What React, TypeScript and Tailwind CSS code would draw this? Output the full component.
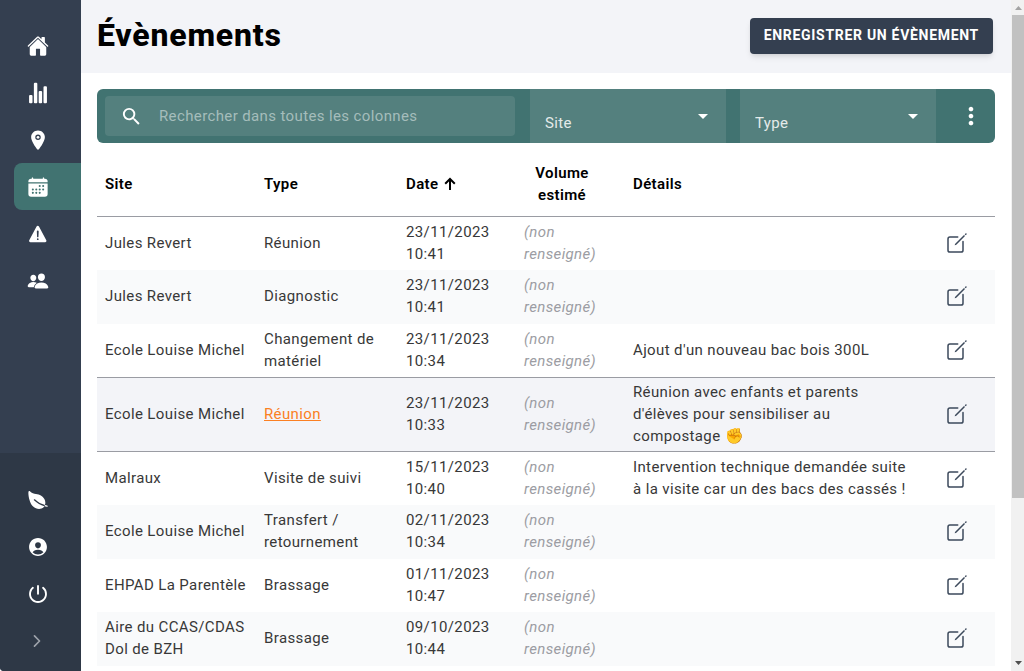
import React, { useState } from "react";
import {
  IoHome,
  IoStatsChart,
  IoLocation,
  IoCalendar,
  IoWarning,
  IoPeople,
  IoLeaf,
  IoPersonCircle,
  IoPower,
  IoChevronForward,
  IoCreateOutline,
} from "react-icons/io5";
import { MdSearch, MdMoreVert, MdArrowDropDown } from "react-icons/md";
import type { IconType } from "react-icons";
import clsx from "clsx";

interface NavItem {
  label: string;
  icon: IconType;
}

interface EventRow {
  id: number;
  site: string;
  type: string;
  day: string;
  time: string;
  details?: string;
}

const MAIN_NAV: NavItem[] = [
  { label: "Accueil", icon: IoHome },
  { label: "Statistiques", icon: IoStatsChart },
  { label: "Sites", icon: IoLocation },
  { label: "Évènements", icon: IoCalendar },
  { label: "Alertes", icon: IoWarning },
  { label: "Utilisateurs", icon: IoPeople },
];

const FOOTER_NAV: NavItem[] = [
  { label: "Compostage", icon: IoLeaf },
  { label: "Mon compte", icon: IoPersonCircle },
  { label: "Déconnexion", icon: IoPower },
];

const EVENTS: EventRow[] = [
  { id: 1, site: "Jules Revert", type: "Réunion", day: "23/11/2023", time: "10:41" },
  { id: 2, site: "Jules Revert", type: "Diagnostic", day: "23/11/2023", time: "10:41" },
  {
    id: 3,
    site: "Ecole Louise Michel",
    type: "Changement de matériel",
    day: "23/11/2023",
    time: "10:34",
    details: "Ajout d'un nouveau bac bois 300L",
  },
  {
    id: 4,
    site: "Ecole Louise Michel",
    type: "Réunion",
    day: "23/11/2023",
    time: "10:33",
    details: "Réunion avec enfants et parents d'élèves pour sensibiliser au compostage ✊",
  },
  {
    id: 5,
    site: "Malraux",
    type: "Visite de suivi",
    day: "15/11/2023",
    time: "10:40",
    details: "Intervention technique demandée suite à la visite car un des bacs des cassés !",
  },
  { id: 6, site: "Ecole Louise Michel", type: "Transfert / retournement", day: "02/11/2023", time: "10:34" },
  { id: 7, site: "EHPAD La Parentèle", type: "Brassage", day: "01/11/2023", time: "10:47" },
  { id: 8, site: "Aire du CCAS/CDAS Dol de BZH", type: "Brassage", day: "09/10/2023", time: "10:44" },
];

const ACTIVE_ROW = 4;

function NavLink({ item, active = false }: { item: NavItem; active?: boolean }) {
  const Icon = item.icon;
  return (
    <a
      href="#"
      aria-label={item.label}
      aria-current={active ? "page" : undefined}
      className={clsx(
        "ml-[14px] flex h-[47px] items-center rounded-l-lg pl-[13px] text-white",
        active && "bg-[#417371]"
      )}
    >
      <Icon size={22} />
    </a>
  );
}

function Sidebar() {
  return (
    <nav className="flex w-[81px] shrink-0 flex-col overflow-hidden rounded-bl bg-[#343f50]">
      <div className="flex-1 pt-[22px]">
        {MAIN_NAV.map((item) => (
          <NavLink key={item.label} item={item} active={item.label === "Évènements"} />
        ))}
      </div>
      <div className="bg-[#2e3846] pt-[23px] pb-[7px]">
        {FOOTER_NAV.map((item) => (
          <NavLink key={item.label} item={item} />
        ))}
        <button
          type="button"
          aria-label="Déplier le menu"
          className="ml-[14px] flex h-[47px] items-center pl-[14px] text-[#9da2aa]"
        >
          <IoChevronForward size={18} />
        </button>
      </div>
    </nav>
  );
}

function FilterSelect({ label, options }: { label: string; options: string[] }) {
  return (
    <div className="relative w-[196px] shrink-0">
      <select
        aria-label={label}
        defaultValue=""
        className="h-full w-full appearance-none bg-[#54807e] px-[15px] pt-[14px] text-[15px] tracking-wide text-[#e4ebea]"
      >
        <option value="">{label}</option>
        {options.map((o) => (
          <option key={o}>{o}</option>
        ))}
      </select>
      <MdArrowDropDown size={24} className="pointer-events-none absolute top-[15px] right-[11px] text-white" />
    </div>
  );
}

function Toolbar() {
  const [query, setQuery] = useState("");
  return (
    <div className="flex h-[54px] overflow-hidden rounded-md bg-[#417371]">
      <label className="my-[7px] ml-2 flex min-w-0 flex-1 items-center rounded-sm bg-[#54807e] pl-[15px]">
        <MdSearch size={23} className="shrink-0 text-white" />
        <input
          type="text"
          aria-label="Rechercher"
          value={query}
          onChange={(e) => setQuery(e.target.value)}
          placeholder="Rechercher dans toutes les colonnes"
          className="ml-4 w-full min-w-0 bg-transparent text-[15px] tracking-wide text-white outline-none placeholder:text-[#a5bdbb]"
        />
      </label>
      <div className="ml-[15px] flex gap-[14px]">
        <FilterSelect label="Site" options={["Jules Revert", "Ecole Louise Michel", "Malraux"]} />
        <FilterSelect label="Type" options={["Réunion", "Diagnostic", "Brassage"]} />
      </div>
      <button
        type="button"
        aria-label="Plus d'options"
        className="flex w-[59px] shrink-0 items-center justify-center pl-[11px] text-white"
      >
        <MdMoreVert size={28} />
      </button>
    </div>
  );
}

function SortArrow() {
  return (
    <svg viewBox="0 0 16 16" className="size-4" fill="none" stroke="currentColor" strokeWidth="2">
      <path d="M8 14V3M3.200 7.800L8 3l4.800 4.800" />
    </svg>
  );
}

function EventsTable() {
  return (
    <table className="w-full table-fixed border-separate border-spacing-0 text-[15px] leading-[22px] tracking-wide text-[#383838]">
      <colgroup>
        <col className="w-[159px]" />
        <col className="w-[142px]" />
        <col className="w-[118px]" />
        <col className="w-[109px]" />
        <col />
        <col className="w-[76px]" />
      </colgroup>
      <thead>
        <tr className="h-[74px] text-left text-black [&>th]:border-b [&>th]:border-[#9a9ca3] [&>th]:px-2 [&>th]:pt-2 [&>th]:font-semibold">
          <th>Site</th>
          <th>Type</th>
          <th aria-sort="ascending">
            <button type="button" className="flex items-center gap-1 font-semibold tracking-wide">
              Date
              <SortArrow />
            </button>
          </th>
          <th>
            <span className="block w-[76px] text-center">Volume estimé</span>
          </th>
          <th>Détails</th>
          <th aria-label="Actions" />
        </tr>
      </thead>
      <tbody>
        {EVENTS.map((event) => {
          const active = event.id === ACTIVE_ROW;
          return (
            <tr
              key={event.id}
              className={clsx(
                "[&>td]:px-2 [&>td]:pb-0.5",
                active
                  ? "h-[75px] bg-[#f3f4f8] [&>td]:border-y [&>td]:border-[#9a9ca3]"
                  : "h-[53px] even:h-[54px] even:bg-[#f9fafb]"
              )}
            >
              <td>{event.site}</td>
              <td>
                {active ? (
                  <a href="#" className="text-[#fb8023] underline">
                    {event.type}
                  </a>
                ) : (
                  event.type
                )}
              </td>
              <td>
                {event.day} {event.time}
              </td>
              <td className="text-[#9c9da3] italic">(non renseigné)</td>
              <td>{event.details}</td>
              <td>
                <button
                  type="button"
                  aria-label="Modifier"
                  className="mx-auto flex justify-center text-[#3d4a5c]"
                >
                  <IoCreateOutline size={24} />
                </button>
              </td>
            </tr>
          );
        })}
      </tbody>
    </table>
  );
}

// Scroll rail on the right of the page
function ScrollRail() {
  return (
    <div aria-hidden="true" className="flex w-[13px] shrink-0 flex-col bg-[#f1f1f1] pl-px">
      <svg viewBox="0 0 12 15" className="h-[15px] w-3 shrink-0">
        <path d="M3 10h7L6.500 6z" fill="#a3a3a3" />
      </svg>
      <div className="h-[72%] shrink-0 bg-[#c1c1c1]" />
      <div className="flex-1" />
      <svg viewBox="0 0 12 15" className="h-[15px] w-3 shrink-0">
        <path d="M3 5h7L6.500 9z" fill="#505050" />
      </svg>
    </div>
  );
}

export default function App() {
  return (
    <div className="flex h-screen overflow-hidden bg-white font-[Roboto,sans-serif]">
      <Sidebar />
      <main className="min-w-0 flex-1 overflow-hidden">
        <header className="flex h-[73px] items-center justify-between bg-[#f3f4f8] pr-[18px] pb-0.5 pl-4">
          <h1 className="pb-0.5 text-[32px] leading-10 font-extrabold tracking-wide text-black">Évènements</h1>
          <button
            type="button"
            className="h-9 rounded bg-[#343f50] px-[14px] pb-0.5 text-sm font-bold tracking-wider text-white uppercase shadow-md"
          >
            Enregistrer un évènement
          </button>
        </header>
        <section className="px-4 pt-4">
          <Toolbar />
          <EventsTable />
        </section>
      </main>
      <ScrollRail />
    </div>
  );
}
